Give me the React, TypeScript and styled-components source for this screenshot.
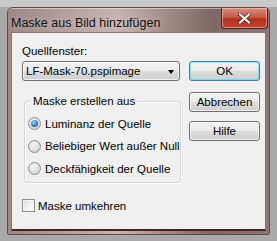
import styled, { createGlobalStyle } from "styled-components";

const Global = createGlobalStyle`
  html, body {
    margin: 0;
    padding: 0;
    width: 277px;
    height: 241px;
    overflow: hidden;
    background: #a9a9a9;
  }
  * { box-sizing: border-box; }
`;

const Desktop = styled.div`
  width: 277px;
  height: 241px;
  padding: 7px 7px 0 7px;
  background: linear-gradient(#c9c9c9 0, #c9c9c9 7px, #a9a9a9 7px);
`;

const Window = styled.div`
  width: 263px;
  height: 228px;
  display: flex;
  flex-direction: column;
  border: 1px solid #5e4c49;
  border-radius: 6px 6px 2px 2px;
  background: linear-gradient(
    90deg,
    #9d8682 0%,
    #b49f9b 22%,
    #c7b4b0 42%,
    #a08884 62%,
    #7f6864 78%,
    #8e7672 100%
  );
  box-shadow: inset 0 1px 0 rgba(255, 255, 255, 0.45);
`;

const TitleBar = styled.div`
  height: 24px;
  display: flex;
  align-items: flex-start;
  justify-content: space-between;
  padding-left: 3px;
`;

const Title = styled.span`
  font-family: "Liberation Sans", Arial, sans-serif;
  font-size: 12.5px;
  color: #101010;
  line-height: 14px;
  margin-top: 8px;
  text-shadow: 0 0 6px rgba(255, 255, 255, 0.5);
`;

const CloseButton = styled.div`
  width: 47px;
  height: 21px;
  margin-right: 1px;
  border: 1px solid #4c1f1a;
  border-top: none;
  border-radius: 0 0 4px 4px;
  background: linear-gradient(#d88e80 0%, #c65b48 45%, #b0301d 55%, #c4462f 100%);
  box-shadow: inset 0 0 0 1px rgba(255, 200, 190, 0.55);
  display: flex;
  align-items: center;
  justify-content: center;
`;

const Client = styled.div`
  flex: 1;
  margin: 0 3px 3px 3px;
  background: #f0f0f0;
  border: 1px solid #8a7470;
  border-bottom: 2px solid #3a2624;
  padding: 12px 0 0 10px;
  display: flex;
  flex-direction: column;
  font-family: "Liberation Sans", Arial, sans-serif;
  font-size: 11.5px;
  color: #000;
  white-space: nowrap;
`;

const Row = styled.div`
  display: flex;
  gap: 9px;
`;

const LeftCol = styled.div`
  width: 158px;
  display: flex;
  flex-direction: column;
`;

const RightCol = styled.div`
  width: 71px;
  display: flex;
  flex-direction: column;
  padding-top: 16px;
`;

const Label = styled.div`
  line-height: 13px;
  height: 13px;
  margin-bottom: 3px;
`;

const Combo = styled.div`
  height: 20px;
  border: 1px solid #707070;
  border-radius: 3px;
  background: linear-gradient(#f2f2f2 0%, #ebebeb 50%, #dddddd 51%, #cfcfcf 100%);
  box-shadow: inset 0 0 0 1px rgba(255, 255, 255, 0.7);
  display: flex;
  align-items: center;
  justify-content: space-between;
  padding: 0 5px 0 3px;
`;

const Arrow = styled.span`
  width: 0;
  height: 0;
  border-left: 3.5px solid transparent;
  border-right: 3.5px solid transparent;
  border-top: 4px solid #000;
  margin-top: 1px;
`;

const Group = styled.fieldset`
  margin: 14px 0 0 2px;
  padding: 9px 0 0 3px;
  width: 157px;
  height: 88px;
  border: 1px solid #d5d9dc;
  border-radius: 3px;
  box-shadow: 1px 1px 0 #fff, inset 1px 1px 0 #fff;
`;

const Legend = styled.legend`
  padding: 0 2px;
  margin-left: 3px;
  line-height: 13px;
`;

const Option = styled.div`
  display: flex;
  align-items: center;
  gap: 4px;
  height: 13px;
  margin-bottom: 9.5px;
`;

const Radio = styled.span<{ $checked?: boolean }>`
  width: 13px;
  height: 13px;
  border-radius: 50%;
  border: 1px solid #8f8f8f;
  background: radial-gradient(circle at 40% 35%, #f6f6f6 0%, #e2e2e2 45%, #c9c9c9 100%);
  display: flex;
  align-items: center;
  justify-content: center;
  &::after {
    content: "";
    display: ${(p) => (p.$checked ? "block" : "none")};
    width: 7px;
    height: 7px;
    border-radius: 50%;
    background: radial-gradient(circle at 40% 35%, #a9d4f5 0%, #2c7ccd 55%, #0d4f99 100%);
  }
`;

const Button = styled.div<{ $default?: boolean; $gap?: number }>`
  height: 20px;
  margin-bottom: ${(p) => p.$gap ?? 0}px;
  border: 1px solid ${(p) => (p.$default ? "#3c7fb1" : "#707070")};
  border-radius: 3px;
  background: linear-gradient(#f2f2f2 0%, #ebebeb 50%, #dddddd 51%, #cfcfcf 100%);
  box-shadow: inset 0 0 0 1px
    ${(p) => (p.$default ? "rgba(72, 216, 251, 0.55)" : "rgba(255, 255, 255, 0.7)")};
  display: flex;
  align-items: center;
  justify-content: center;
`;

const CheckRow = styled.div`
  display: flex;
  align-items: center;
  gap: 3px;
  margin-top: 16px;
`;

const Checkbox = styled.span`
  width: 13px;
  height: 13px;
  border: 1px solid #8e8f8f;
  background: linear-gradient(135deg, #dcdcdc 0%, #f4f4f4 60%, #fff 100%);
  box-shadow: inset 0 0 0 1px #f4f4f4;
`;

export default function App() {
  return (
    <>
      <Global />
      <Desktop>
        <Window>
          <TitleBar>
            <Title>Maske aus Bild hinzufügen</Title>
            <CloseButton>
              <svg width="13" height="11" viewBox="0 0 13 11">
                <path
                  d="M2 1.5 L11 9.5 M11 1.5 L2 9.5"
                  stroke="#4a1a14"
                  strokeWidth="3.6"
                  strokeLinecap="square"
                />
                <path
                  d="M2 1.5 L11 9.5 M11 1.5 L2 9.5"
                  stroke="#fff"
                  strokeWidth="2.2"
                  strokeLinecap="square"
                />
              </svg>
            </CloseButton>
          </TitleBar>
          <Client>
            <Row>
              <LeftCol>
                <Label>Quellfenster:</Label>
                <Combo>
                  <span>LF-Mask-70.pspimage</span>
                  <Arrow />
                </Combo>
                <Group>
                  <Legend>Maske erstellen aus</Legend>
                  <Option>
                    <Radio $checked />
                    <span>Luminanz der Quelle</span>
                  </Option>
                  <Option>
                    <Radio />
                    <span>Beliebiger Wert außer Null</span>
                  </Option>
                  <Option>
                    <Radio />
                    <span>Deckfähigkeit der Quelle</span>
                  </Option>
                </Group>
              </LeftCol>
              <RightCol>
                <Button $default $gap={11}>OK</Button>
                <Button $gap={9}>Abbrechen</Button>
                <Button>Hilfe</Button>
              </RightCol>
            </Row>
            <CheckRow>
              <Checkbox />
              <span>Maske umkehren</span>
            </CheckRow>
          </Client>
        </Window>
      </Desktop>
    </>
  );
}
